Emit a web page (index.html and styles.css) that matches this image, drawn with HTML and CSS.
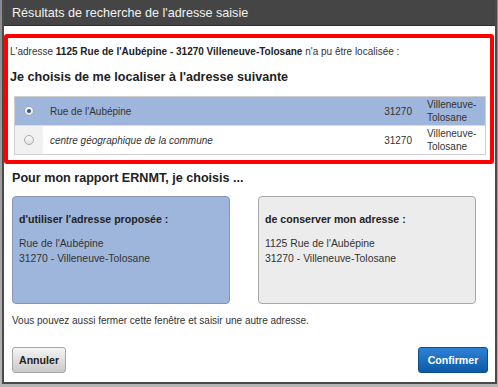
FILE: index.html
```html
<!DOCTYPE html>
<html lang="fr">
  <head>
    <meta charset="UTF-8" />
    <title>Résultats de recherche de l'adresse saisie</title>
    <link rel="stylesheet" href="styles.css">
  </head>
  <body>
    <div class="dialog">
      <div class="dialogTitle">Résultats de recherche de l'adresse saisie</div>

      <div class="alertBox">
        <p class="notFound">
          L'adresse <b>1125 Rue de l'Aubépine - 31270 Villeneuve-Tolosane</b> n'a pu être localisée :
        </p>
        <h2>Je choisis de me localiser à l'adresse suivante</h2>
        <div class="results">
          <div class="resultRow selected">
            <div class="radioCell"><span class="radio checked"></span></div>
            <div class="label">Rue de l'Aubépine</div>
            <div class="zip">31270</div>
            <div class="city">Villeneuve-<br />Tolosane</div>
          </div>
          <div class="resultRow">
            <div class="radioCell"><span class="radio"></span></div>
            <div class="label"><i>centre géographique de la commune</i></div>
            <div class="zip">31270</div>
            <div class="city">Villeneuve-<br />Tolosane</div>
          </div>
        </div>
      </div>

      <h2 class="choiceTitle">Pour mon rapport ERNMT, je choisis ...</h2>
      <div class="choices">
        <div class="choice proposed">
          <h3>d'utiliser l'adresse proposée :</h3>
          <p>Rue de l'Aubépine<br />31270 - Villeneuve-Tolosane</p>
        </div>
        <div class="choice mine">
          <h3>de conserver mon adresse :</h3>
          <p>1125 Rue de l'Aubépine<br />31270 - Villeneuve-Tolosane</p>
        </div>
      </div>

      <p class="hint">Vous pouvez aussi fermer cette fenêtre et saisir une autre adresse.</p>

      <div class="actions">
        <button class="btn cancel">Annuler</button>
        <button class="btn confirm">Confirmer</button>
      </div>
    </div>
  </body>
</html>
```

FILE: styles.css
```css
body {
  margin: 0;
  padding: 0 1px 0 2px;
  height: 387px;
  box-sizing: border-box;
  background: linear-gradient(#8a8a8a, #b5b5b5);
  font-family: "Liberation Sans", Arial, sans-serif;
  color: #333;
  overflow: hidden;
}
.dialog {
  height: 384px;
  box-sizing: border-box;
  background: #fff;
  border: 2px solid #4a4a4a;
  border-top: 0;
  display: flex;
  flex-direction: column;
}
.dialogTitle {
  background: #454545;
  color: #f2f2f2;
  font-size: 12.6px;
  height: 26px;
  line-height: 27px;
  padding-left: 8px;
  border-bottom: 1px solid #2f2f2f;
  box-sizing: border-box;
}

.alertBox {
  margin: 8px 1px 0 0;
  border: 4px solid #ff0000;
  border-radius: 3px;
  padding: 7px 2px 5px 2px;
}
.notFound {
  margin: 0;
  font-size: 10px;
  line-height: 14px;
}
.notFound b {
  color: #222;
}
h2 {
  margin: 0;
  font-size: 12.6px;
  color: #222;
}
.alertBox h2 {
  margin-top: 10px;
  line-height: 16px;
}
.results {
  margin: 11px 2px 0 4px;
  border: 1px solid #cfcfcf;
  font-size: 10px;
}
.resultRow {
  display: grid;
  grid-template-columns: 28px 1fr auto 58px;
  height: 28px;
  align-items: center;
}
.resultRow + .resultRow {
  border-top: 1px solid #dcdcdc;
}
.resultRow.selected {
  background: #9fb6dc;
}
.radioCell {
  height: 100%;
  display: flex;
  justify-content: center;
  align-items: center;
  background: #f1f1f1;
}
.selected .radioCell {
  background: transparent;
}
.radio {
  width: 8px;
  height: 8px;
  border-radius: 50%;
  border: 1px solid #a9a9a9;
  background: linear-gradient(#fafafa, #e2e2e2);
  display: flex;
  justify-content: center;
  align-items: center;
}
.radio.checked::after {
  content: "";
  width: 4px;
  height: 4px;
  border-radius: 50%;
  background: #2a5b8c;
}
.label {
  padding-left: 7px;
  color: #333;
}
.zip {
  padding-right: 15px;
}
.city {
  line-height: 13px;
}

.choiceTitle {
  margin: 6px 0 0 8px;
  line-height: 16px;
}
.choices {
  display: flex;
  gap: 28px;
  margin: 10px 0 0 8px;
}
.choice {
  width: 218px;
  height: 108px;
  box-sizing: border-box;
  border-radius: 4px;
  padding: 15px 6px;
  font-size: 10.4px;
}
.choice h3 {
  margin: 0;
  font-size: 10.6px;
  line-height: 14px;
  color: #222;
}
.choice p {
  margin: 10px 0 0 0;
  line-height: 15px;
}
.proposed {
  background: #9fb6dc;
  border: 1px solid #8596b4;
}
.mine {
  background: #ececec;
  border: 1px solid #a8a8a8;
}

.hint {
  margin: 10px 0 0 8px;
  font-size: 10px;
  line-height: 14px;
}
.actions {
  margin: 19px 7px 0 8px;
  display: flex;
  justify-content: space-between;
}
.btn {
  height: 26px;
  border-radius: 3px;
  font-family: "Liberation Sans", Arial, sans-serif;
  font-size: 10.6px;
  font-weight: bold;
  padding: 0;
}
.cancel {
  width: 54px;
  color: #222;
  background: linear-gradient(#f4f4f4, #c9c9c9);
  border: 1px solid #a6a6a6;
}
.confirm {
  width: 70px;
  color: #fff;
  background: linear-gradient(#2d82d6, #0d5aa6);
  border: 1px solid #0c4d8f;
}
```
